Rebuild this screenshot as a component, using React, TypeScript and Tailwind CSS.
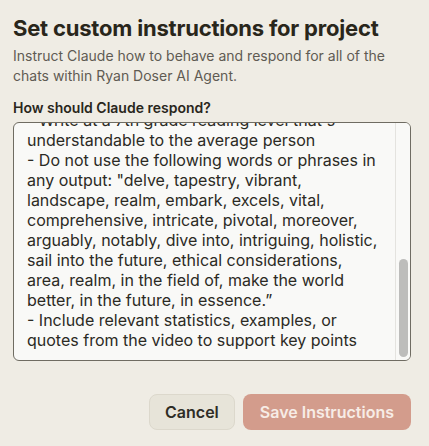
import React from 'react';

const lines = [
  "- Write at a 7th grade reading level that's",
  'understandable to the average person',
  '- Do not use the following words or phrases in',
  'any output: "delve, tapestry, vibrant,',
  'landscape, realm, embark, excels, vital,',
  'comprehensive, intricate, pivotal, moreover,',
  'arguably, notably, dive into, intriguing, holistic,',
  'sail into the future, ethical considerations,',
  'area, realm, in the field of, make the world',
  'better, in the future, in essence.”',
  '- Include relevant statistics, examples, or',
  'quotes from the video to support key points',
];

const App: React.FC = () => {
  return (
    <div
      className="min-h-[446px] w-[429px] bg-[#efece4] pl-[13px] pr-[18px] pt-[14px] text-[#29261b]"
      style={{ fontFamily: 'Inter, "Noto Sans", sans-serif' }}
    >
      {/* Header */}
      <h1 className="text-[22px] font-bold leading-[28px] tracking-[-0.2px]">
        Set custom instructions for project
      </h1>
      <p className="mt-[4px] pr-[10px] text-[14px] leading-[20px] text-[#5f5b53]">
        Instruct Claude how to behave and respond for all of the chats within Ryan Doser AI Agent.
      </p>

      {/* Field */}
      <label className="mt-[12px] block text-[14px] font-semibold leading-[20px]">
        How should Claude respond?
      </label>
      <div className="relative mt-[4px] h-[239px] overflow-hidden rounded-[6px] border border-[#6f6c62] bg-[#f9f9f7]">
        <div className="-mt-[13px] pl-[13px] pr-[24px] text-[16px] leading-[20px] text-[#2b2a24]">
          {lines.map((line, i) => (
            <div key={i} className="whitespace-nowrap">
              {line}
            </div>
          ))}
        </div>
        {/* Scrollbar */}
        <div className="absolute right-0 top-0 bottom-0 w-[15px] border-l border-[#e4e3df] bg-[#f9f9f7]">
          <div className="absolute left-[3px] top-[136px] h-[98px] w-[9px] rounded-full bg-[#bdbdbb]" />
        </div>
      </div>

      {/* Actions */}
      <div className="mt-[33px] flex justify-end gap-[8px]">
        <button className="h-[36px] rounded-[8px] border border-[#dcd8cc] bg-[#e7e4d9] px-[15px] text-[16px] font-semibold text-[#2f2d26]">
          Cancel
        </button>
        <button className="h-[36px] rounded-[8px] bg-[#d39c8c] px-[17px] text-[16px] font-semibold text-[#f7ece6]">
          Save Instructions
        </button>
      </div>
    </div>
  );
};

export default App;
